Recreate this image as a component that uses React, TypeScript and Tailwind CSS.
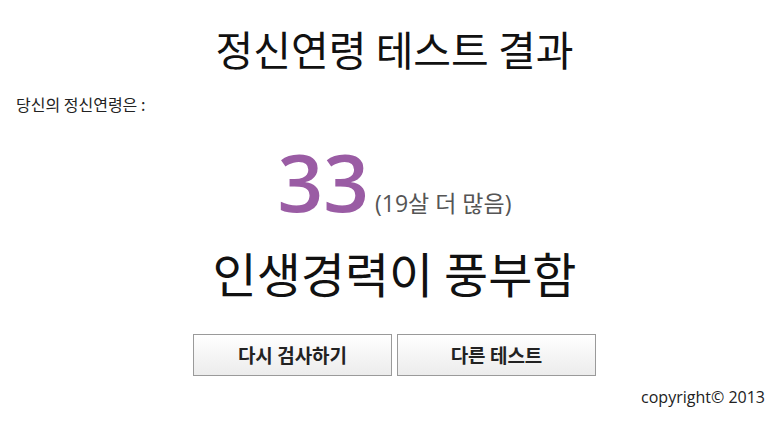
export default function App() {
  return (
    <div
      className="min-h-[423px] w-full bg-white text-[#111] pl-[8px]"
      style={{ fontFamily: '"Noto Sans CJK KR", "Noto Sans", sans-serif' }}
    >
      <h1 className="pt-[22px] text-center text-[41px] font-normal leading-[52px]">
        정신연령 테스트 결과
      </h1>
      <p className="mt-[19px] pl-[8px] text-[16px] leading-[22px] text-[#222]">당신의 정신연령은 :</p>

      <div className="mt-[26px] flex items-end justify-center">
        <span
          className="text-[80px] font-semibold leading-[80px] text-[#9a5ca4]"
          style={{ fontFamily: '"Open Sans", sans-serif' }}
        >
          33
        </span>
        <span
          className="mb-[3px] ml-[6px] text-[23px] leading-[30px] text-[#555]"
          style={{ fontFamily: '"Open Sans", "Noto Sans CJK KR", sans-serif' }}
        >
          (19살 더 많음)
        </span>
      </div>

      <h2 className="mt-[22px] text-center text-[48px] font-normal leading-[58px]">인생경력이 풍부함</h2>

      <div className="mt-[33px] flex justify-center gap-[5px]">
        <button className="h-[42px] w-[199px] border border-[#9a9a9a] bg-gradient-to-b from-white to-[#ececec] text-[19px] font-bold text-[#222]">
          다시 검사하기
        </button>
        <button className="h-[42px] w-[199px] border border-[#9a9a9a] bg-gradient-to-b from-white to-[#ececec] text-[19px] font-bold text-[#222]">
          다른 테스트
        </button>
      </div>

      <p
        className="mt-[9px] pr-[16px] text-right text-[16px] leading-[24px] text-[#222]"
        style={{ fontFamily: '"Open Sans", sans-serif' }}
      >
        copyright© 2013
      </p>
    </div>
  );
}
